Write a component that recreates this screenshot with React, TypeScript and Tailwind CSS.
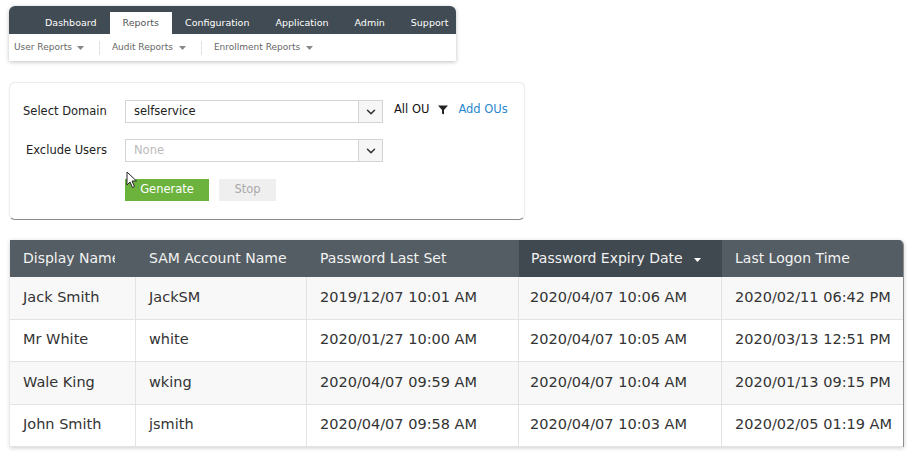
import { ChevronDown } from 'lucide-react'

type Row = {
  name: string
  sam: string
  lastSet: string
  expiry: string
  logon: string
}

const rows: Row[] = [
  { name: 'Jack Smith', sam: 'JackSM', lastSet: '2019/12/07 10:01 AM', expiry: '2020/04/07 10:06 AM', logon: '2020/02/11 06:42 PM' },
  { name: 'Mr White', sam: 'white', lastSet: '2020/01/27 10:00 AM', expiry: '2020/04/07 10:05 AM', logon: '2020/03/13 12:51 PM' },
  { name: 'Wale King', sam: 'wking', lastSet: '2020/04/07 09:59 AM', expiry: '2020/04/07 10:04 AM', logon: '2020/01/13 09:15 PM' },
  { name: 'John Smith', sam: 'jsmith', lastSet: '2020/04/07 09:58 AM', expiry: '2020/04/07 10:03 AM', logon: '2020/02/05 01:19 AM' },
]

const tabs = ['Dashboard', 'Reports', 'Configuration', 'Application', 'Admin', 'Support']

function Caret({ className = '' }: { className?: string }) {
  return (
    <svg width="7" height="4" viewBox="0 0 7 4" className={className}>
      <path d="M0 0h7L3.5 4z" fill="currentColor" />
    </svg>
  )
}

function NavBar() {
  return (
    <div className="ml-[9px] w-[447px] overflow-hidden rounded-t-[6px] bg-white shadow-[0_1px_4px_rgba(0,0,0,0.25)]">
      <div className="flex h-[28px] items-end bg-[#414b53] pl-[23px]">
        {tabs.map((t) =>
          t === 'Reports' ? (
            <div key={t} className="flex h-[22px] items-center bg-white px-[13px] pt-[1px] text-[9.5px] text-[#555]">
              {t}
            </div>
          ) : (
            <div key={t} className="flex h-[22px] items-center px-[13px] pt-[1px] text-[9.5px] text-white">
              {t}
            </div>
          ),
        )}
      </div>
      <div className="flex h-[27px] items-center pl-[5px] text-[9px] text-[#666]">
        <span>User Reports</span>
        <Caret className="ml-[5px] mt-[1px] text-[#888]" />
        <div className="ml-[15px] mr-[12px] h-[14px] w-px bg-[#e2e2e2]" />
        <span>Audit Reports</span>
        <Caret className="ml-[6px] mt-[1px] text-[#888]" />
        <div className="ml-[15px] mr-[12px] h-[14px] w-px bg-[#e2e2e2]" />
        <span>Enrollment Reports</span>
        <Caret className="ml-[6px] mt-[1px] text-[#888]" />
      </div>
    </div>
  )
}

function SelectBox({ value, placeholder }: { value?: string; placeholder?: string }) {
  return (
    <div className="flex h-[23px] w-[258px] border border-[#d4d4d4] bg-white">
      <div className={`flex flex-1 items-center pl-[8px] ${value ? 'text-[#222]' : 'text-[#bbb]'}`}>
        {value ?? placeholder}
      </div>
      <div className="flex w-[24px] items-center justify-center border-l border-[#d4d4d4] bg-[#f6f6f6]">
        <ChevronDown size={14} strokeWidth={2.6} className="text-[#333]" />
      </div>
    </div>
  )
}

function ReportForm() {
  return (
    <div className="relative ml-[9px] mt-[21px] w-[516px] rounded-[6px] border border-[#ececec] border-b-[#8a8a8a] bg-white pb-[18px] pt-[17px] text-[11.5px] shadow-[0_0_2px_rgba(0,0,0,0.06)]">
      <div className="flex items-center">
        <div className="w-[115px] pl-[13px] text-[#222]">Select Domain</div>
        <SelectBox value="selfservice" />
        <div className="ml-[11px] -mt-[4px] flex items-center">
          <span className="text-[#111]">All OU</span>
          <svg width="10" height="10" viewBox="0 0 10 10" className="ml-[9px]">
            <path d="M0 0.5h10L6 5v4.5L4 8.5V5z" fill="#222" />
          </svg>
          <span className="ml-[10px] text-[#2a88cf]">Add OUs</span>
        </div>
      </div>
      <div className="mt-[16px] flex items-center">
        <div className="w-[115px] pl-[16px] text-[#222]">Exclude Users</div>
        <SelectBox placeholder="None" />
      </div>
      <div className="mt-[17px] flex items-center pl-[115px]">
        <button className="h-[22px] w-[84px] bg-[#6cb33e] text-[11.5px] text-white">Generate</button>
        <button className="ml-[10px] h-[22px] w-[57px] bg-[#efefef] text-[11.5px] text-[#aaa]">Stop</button>
      </div>
      <svg width="12" height="18" viewBox="0 0 12 18" className="absolute left-[116px] top-[88px]">
        <path d="M1 1v13l3-3 2.5 5.5 2-1L6 10h4.5z" fill="#fff" stroke="#222" strokeWidth="1" strokeLinejoin="round" />
      </svg>
    </div>
  )
}

const cols = ['w-[126px]', 'w-[171px]', 'w-[212px]', 'w-[203px]', 'w-[181px]']

function ReportTable() {
  return (
    <div className="ml-[10px] mt-[20px] w-[894px] overflow-hidden rounded-tr-[5px] border-r border-[#8e8e8e] bg-white shadow-[0_1px_4px_rgba(0,0,0,0.2)]">
      <div className="flex h-[37px] bg-[#545d63] text-[14px] text-[#f2f2f2]">
        <div className={`${cols[0]} flex items-center pl-[13px]`}>
          <div className="w-[92px] overflow-hidden whitespace-nowrap">Display Name</div>
        </div>
        <div className={`${cols[1]} flex items-center pl-[13px]`}>SAM Account Name</div>
        <div className={`${cols[2]} flex items-center pl-[13px]`}>Password Last Set</div>
        <div className={`${cols[3]} flex items-center bg-[#40494f] pl-[12px]`}>
          Password Expiry Date
          <Caret className="ml-[11px] mt-[2px] text-white" />
        </div>
        <div className={`${cols[4]} flex items-center pl-[13px]`}>Last Logon Time</div>
      </div>
      {rows.map((r, i) => (
        <div
          key={r.sam}
          className={`flex h-[42.5px] border-b border-[#e3e3e3] text-[14.5px] text-[#333] ${i % 2 === 0 ? 'bg-[#f8f8f8]' : 'bg-white'}`}
        >
          <div className={`${cols[0]} flex items-center border-r border-[#e3e3e3] pl-[13px]`}>{r.name}</div>
          <div className={`${cols[1]} flex items-center border-r border-[#e3e3e3] pl-[13px]`}>{r.sam}</div>
          <div className={`${cols[2]} flex items-center border-r border-[#e3e3e3] pl-[13px]`}>{r.lastSet}</div>
          <div className={`${cols[3]} flex items-center border-r border-[#e3e3e3] pl-[11px]`}>{r.expiry}</div>
          <div className={`${cols[4]} flex items-center pl-[13px]`}>{r.logon}</div>
        </div>
      ))}
    </div>
  )
}

export default function App() {
  return (
    <div className="h-[459px] w-[912px] overflow-hidden bg-white pt-[6px] font-['DejaVu_Sans',sans-serif]">
      <NavBar />
      <ReportForm />
      <ReportTable />
    </div>
  )
}
